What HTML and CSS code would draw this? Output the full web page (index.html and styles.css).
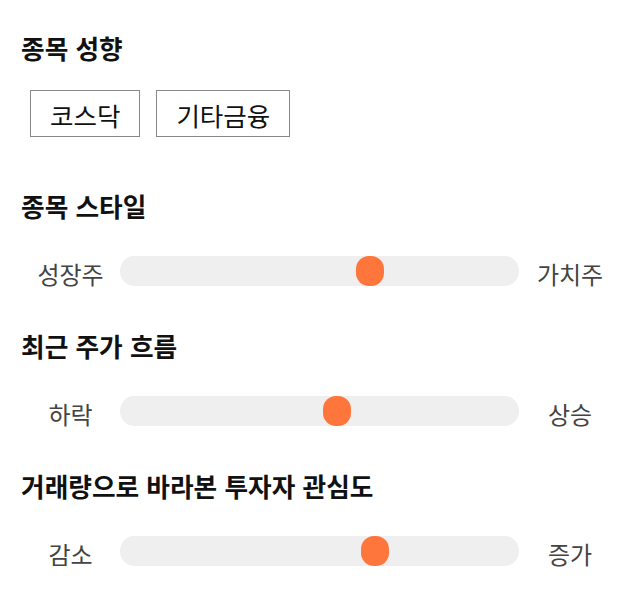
FILE: index.html
```html
<!DOCTYPE html>
<html lang="ko">
<head>
<meta charset="utf-8">
<link rel="stylesheet" href="styles.css">
</head>
<body>
<main class="page">
  <section class="block block-chips">
    <h2 class="title">종목 성향</h2>
    <div class="chips">
      <span class="chip">코스닥</span>
      <span class="chip">기타금융</span>
    </div>
  </section>

  <section class="block">
    <h2 class="title">종목 스타일</h2>
    <div class="slider-row">
      <span class="label">성장주</span>
      <div class="track"><span class="thumb" style="left: calc(62.7% - 14px)"></span></div>
      <span class="label">가치주</span>
    </div>
  </section>

  <section class="block">
    <h2 class="title">최근 주가 흐름</h2>
    <div class="slider-row">
      <span class="label">하락</span>
      <div class="track"><span class="thumb" style="left: calc(54.4% - 14px)"></span></div>
      <span class="label">상승</span>
    </div>
  </section>

  <section class="block">
    <h2 class="title">거래량으로 바라본 투자자 관심도</h2>
    <div class="slider-row">
      <span class="label">감소</span>
      <div class="track"><span class="thumb" style="left: calc(63.9% - 14px)"></span></div>
      <span class="label">증가</span>
    </div>
  </section>
</main>
</body>
</html>
```

FILE: styles.css
```css
html, body {
  margin: 0;
  padding: 0;
  background: #ffffff;
}

body {
  font-family: "Noto Sans CJK KR", "Noto Sans", sans-serif;
  color: #111111;
  min-height: 606px;
}

.page {
  display: flex;
  flex-direction: column;
  gap: 45px;
  padding: 33px 19px 40px 21px;
}

.block {
  display: flex;
  flex-direction: column;
  gap: 35px;
}

.block-chips {
  gap: 27px;
  margin-bottom: 9px;
}

.title {
  margin: 0;
  font-size: 25.7px;
  line-height: 30px;
  font-weight: 700;
  color: #111111;
}

.chips {
  display: flex;
  gap: 16px;
  padding-left: 9px;
}

.chip {
  display: flex;
  align-items: center;
  justify-content: center;
  height: 43px;
  padding: 2px 19px 0;
  box-sizing: content-box;
  border: 1px solid #888888;
  font-size: 25.5px;
  line-height: 30px;
  color: #111111;
}

.slider-row {
  display: grid;
  grid-template-columns: 99px 1fr 102px;
  align-items: center;
  height: 30px;
}

.label {
  text-align: center;
  font-size: 24px;
  line-height: 30px;
  color: #444444;
  position: relative;
  top: 3px;
}

.track {
  position: relative;
  height: 30px;
  background: #efefef;
  border-radius: 14px / 15px;
}

.thumb {
  position: absolute;
  top: 0;
  width: 28px;
  height: 30px;
  border-radius: 13px;
  background: #ff763d;
}
```
